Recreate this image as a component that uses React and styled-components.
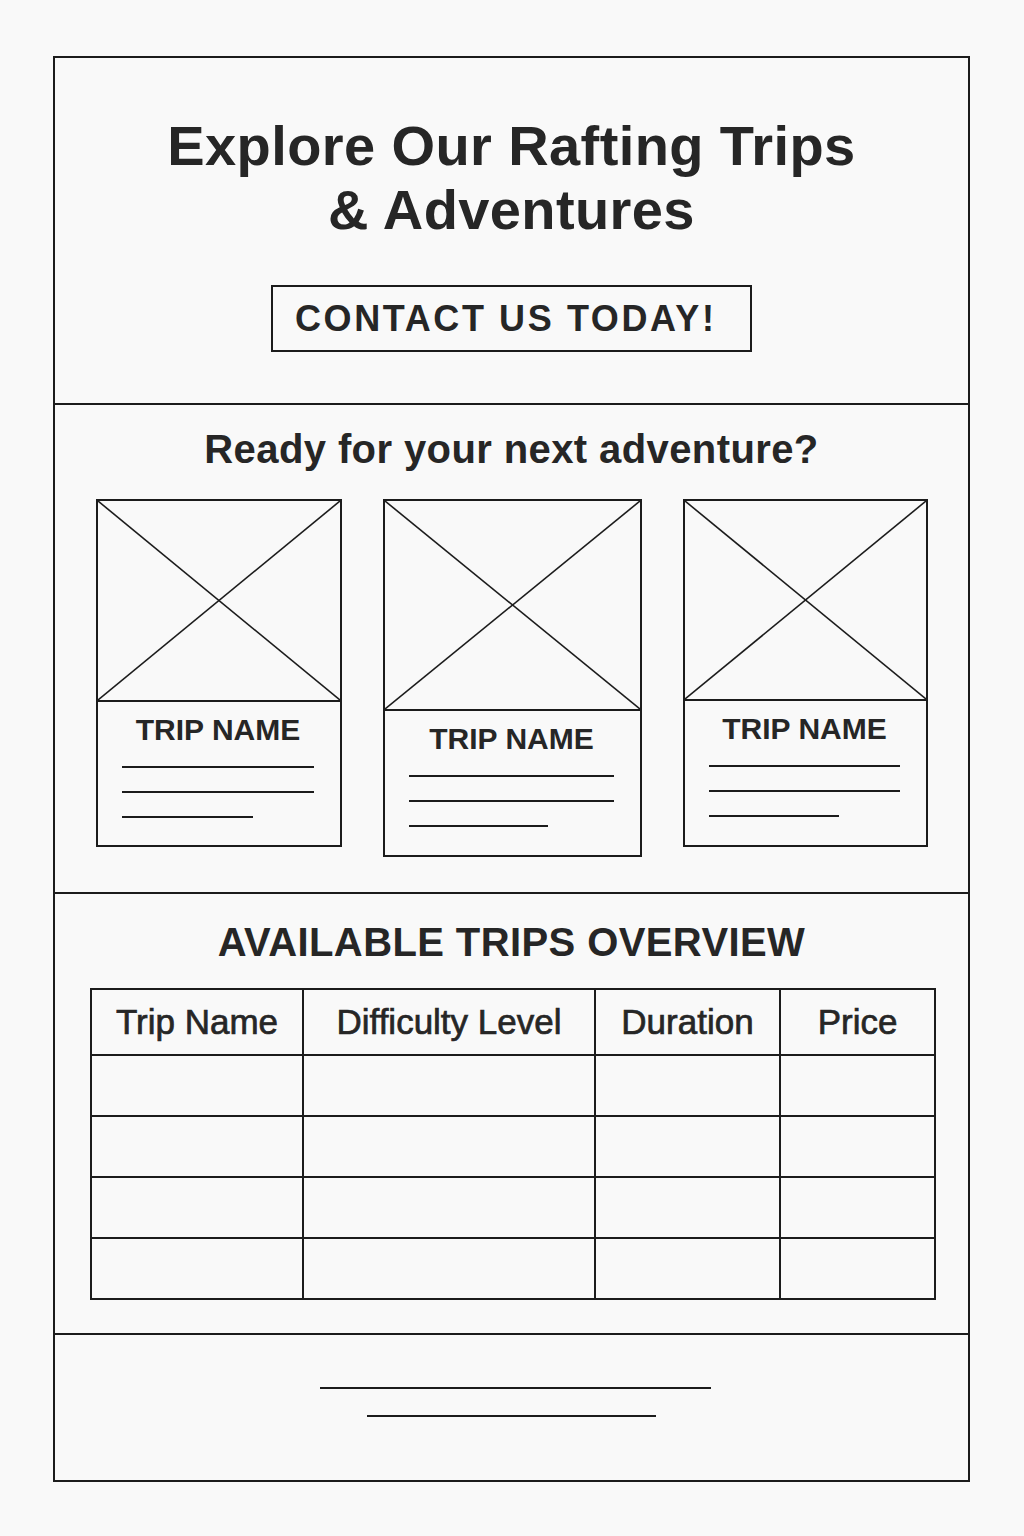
import React from "react";
import styled, { createGlobalStyle } from "styled-components";

const GlobalStyle = createGlobalStyle`
  body {
    margin: 0;
    background: #f9f9f9;
    font-family: "Liberation Sans", Arial, sans-serif;
    color: #262626;
  }
`;

const Page = styled.div`
  padding: 56px 0 56px 53px;
`;

const Frame = styled.div`
  width: 917px;
  box-sizing: border-box;
  border: 2px solid #1c1c1c;
  display: flex;
  flex-direction: column;
`;

const Section = styled.section`
  border-top: ${(p) => (p.$first ? "none" : "2px solid #1c1c1c")};
  display: flex;
  flex-direction: column;
  align-items: center;
`;

const Hero = styled(Section)`
  padding: 56px 0 51px;
`;

const Title = styled.h1`
  margin: 0 0 43px;
  font-size: 56px;
  line-height: 64px;
  font-weight: 700;
  letter-spacing: 0.4px;
  text-align: center;
`;

const ContactButton = styled.button`
  width: 481px;
  height: 67px;
  box-sizing: border-box;
  border: 2px solid #1c1c1c;
  background: transparent;
  padding: 0 0 0 22px;
  text-align: left;
  font-family: inherit;
  font-size: 36px;
  font-weight: 700;
  letter-spacing: 2.6px;
  color: #262626;
  cursor: pointer;
`;

const Heading = styled.h2`
  margin: 0;
  font-size: 40px;
  line-height: 46px;
  font-weight: 700;
  letter-spacing: ${(p) => p.$spacing || 0};
  text-align: center;
`;

const TripsSection = styled(Section)`
  padding: 21px 0 35px;
  gap: 27px;
  align-items: stretch;
`;

const CardRow = styled.div`
  display: flex;
  justify-content: space-between;
  align-items: flex-start;
  padding: 0 40px 0 41px;
`;

const Card = styled.div`
  width: ${(p) => p.$w}px;
  height: ${(p) => p.$h}px;
  box-sizing: border-box;
  border: 2px solid #1c1c1c;
  display: flex;
  flex-direction: column;
`;

const ImageBox = styled.div`
  height: ${(p) => p.$h}px;
  border-bottom: 2px solid #1c1c1c;
  svg {
    display: block;
    width: 100%;
    height: 100%;
  }
`;

const CardBody = styled.div`
  padding: 11px 26px 0 24px;
  display: flex;
  flex-direction: column;
`;

const CardTitle = styled.h3`
  margin: 0 0 19px;
  font-size: 30px;
  line-height: 34px;
  font-weight: 700;
  text-align: center;
`;

const TextLine = styled.div`
  height: 2px;
  width: ${(p) => (p.$short ? "68%" : "100%")};
  background: #1c1c1c;
  margin-bottom: 23px;
`;

const OverviewSection = styled(Section)`
  padding: 25px 0 33px;
  gap: 23px;
  align-items: stretch;
`;

const Table = styled.table`
  width: 836px;
  margin-left: 35px;
  border-collapse: collapse;
  table-layout: fixed;
`;

const HeadCell = styled.th`
  width: ${(p) => p.$w}px;
  height: 64px;
  border: 2px solid #1c1c1c;
  padding: 0;
  font-size: 35px;
  font-weight: 400;
  -webkit-text-stroke: 0.7px #262626;
  text-align: center;
  vertical-align: middle;
`;

const Cell = styled.td`
  height: 59px;
  border: 2px solid #1c1c1c;
  padding: 0;
`;

const Footer = styled(Section)`
  padding: 52px 0 63px;
  gap: 26px;
`;

const FooterLine = styled.div`
  height: 2px;
  width: ${(p) => p.$w}px;
  margin-left: ${(p) => p.$shift || 0}px;
  background: #1c1c1c;
`;

const Placeholder = () => (
  <svg viewBox="0 0 100 100" preserveAspectRatio="none">
    <line x1="0" y1="0" x2="100" y2="100" stroke="#1c1c1c" strokeWidth="1.6" vectorEffect="non-scaling-stroke" />
    <line x1="100" y1="0" x2="0" y2="100" stroke="#1c1c1c" strokeWidth="1.6" vectorEffect="non-scaling-stroke" />
  </svg>
);

const cards = [
  { w: 246, h: 348, img: 199 },
  { w: 259, h: 358, img: 208 },
  { w: 245, h: 348, img: 198 },
];

const columns = [
  { label: "Trip Name", w: 210 },
  { label: "Difficulty Level", w: 290 },
  { label: "Duration", w: 183 },
  { label: "Price", w: 153 },
];

const App = () => {
  return (
    <>
      <GlobalStyle />
      <Page>
        <Frame>
          <Hero $first>
            <Title>
              Explore Our Rafting Trips
              <br />& Adventures
            </Title>
            <ContactButton>CONTACT US TODAY!</ContactButton>
          </Hero>

          <TripsSection>
            <Heading $spacing="0.4px">Ready for your next adventure?</Heading>
            <CardRow>
              {cards.map((c, i) => (
                <Card key={i} $w={c.w} $h={c.h}>
                  <ImageBox $h={c.img}>
                    <Placeholder />
                  </ImageBox>
                  <CardBody>
                    <CardTitle>TRIP NAME</CardTitle>
                    <TextLine />
                    <TextLine />
                    <TextLine $short />
                  </CardBody>
                </Card>
              ))}
            </CardRow>
          </TripsSection>

          <OverviewSection>
            <Heading $spacing="0.4px">AVAILABLE TRIPS OVERVIEW</Heading>
            <Table>
              <thead>
                <tr>
                  {columns.map((col) => (
                    <HeadCell key={col.label} $w={col.w}>
                      {col.label}
                    </HeadCell>
                  ))}
                </tr>
              </thead>
              <tbody>
                {[0, 1, 2, 3].map((r) => (
                  <tr key={r}>
                    {columns.map((col) => (
                      <Cell key={col.label} />
                    ))}
                  </tr>
                ))}
              </tbody>
            </Table>
          </OverviewSection>

          <Footer>
            <FooterLine $w={391} $shift={8} />
            <FooterLine $w={289} />
          </Footer>
        </Frame>
      </Page>
    </>
  );
};

export default App;
